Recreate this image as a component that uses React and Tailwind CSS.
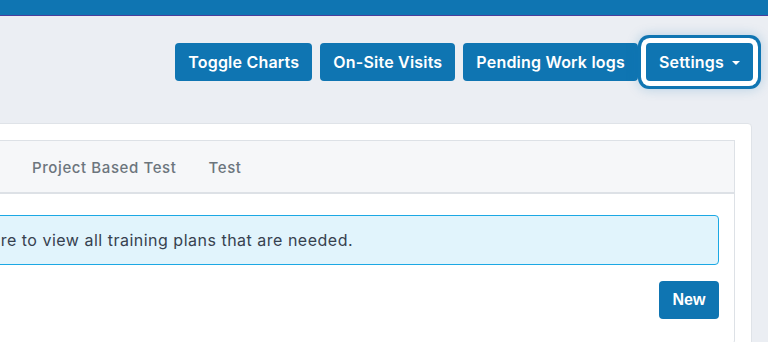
function TopButton({ children, active }) {
  return (
    <button
      className={
        "flex h-[38px] items-center rounded-[4px] bg-[#0f75b2] px-[13px] text-[16px] font-semibold tracking-[0.2px] text-white " +
        (active
          ? "shadow-[0_0_0_5px_#ffffff,0_0_0_8px_#0f75b2,0_0_12px_8px_rgba(15,117,178,0.25)]"
          : "")
      }
    >
      {children}
      {active && (
        <span className="ml-[8px] mt-[2px] border-x-[4px] border-t-[4px] border-x-transparent border-t-white" />
      )}
    </button>
  );
}

export default function App() {
  return (
    <div
      className="relative h-[342px] w-[768px] overflow-hidden bg-[#ebeef3]"
      style={{ fontFamily: "Inter, 'Open Sans', sans-serif" }}
    >
      <div className="h-[16px] border-b border-[#4a3f9c] bg-[#0f75b2]" />

      <div className="flex justify-end gap-2 pr-[15px] pt-[27px]">
        <TopButton>Toggle Charts</TopButton>
        <TopButton>On-Site Visits</TopButton>
        <TopButton>Pending Work logs</TopButton>
        <TopButton active>Settings</TopButton>
      </div>

      <div className="ml-[-118px] mr-4 mt-[42px] rounded-[4px] border border-[#dfe3e8] bg-white p-4">
        <div className="flex h-[54px] items-center border border-b-2 border-[#dde1e6] bg-[#f6f7f9] pl-[116px] pt-[4px] text-[15px] font-medium tracking-[0.6px] text-[#6c757d]">
          <span className="px-4">Project Based Test</span>
          <span className="px-4">Test</span>
        </div>
        <div className="rounded-b-[4px] border border-t-0 border-[#dde1e6] px-[15px] pb-6 pt-[21px]">
          <div className="rounded-[4px] border border-[#1ba8e4] bg-[#e1f4fc] px-5 py-[12px] text-[16px] tracking-[0.5px] text-[#36414f]">
            Click here to view all training plans that are needed.
          </div>
          <div className="mt-4 flex justify-end">
            <button
              className="h-[38px] w-[60px] rounded-[4px] bg-[#0f75b2] text-[16px] font-bold text-white"
              style={{ fontFamily: "'Liberation Sans', Arial, sans-serif" }}
            >
              New
            </button>
          </div>
        </div>
      </div>
    </div>
  );
}
